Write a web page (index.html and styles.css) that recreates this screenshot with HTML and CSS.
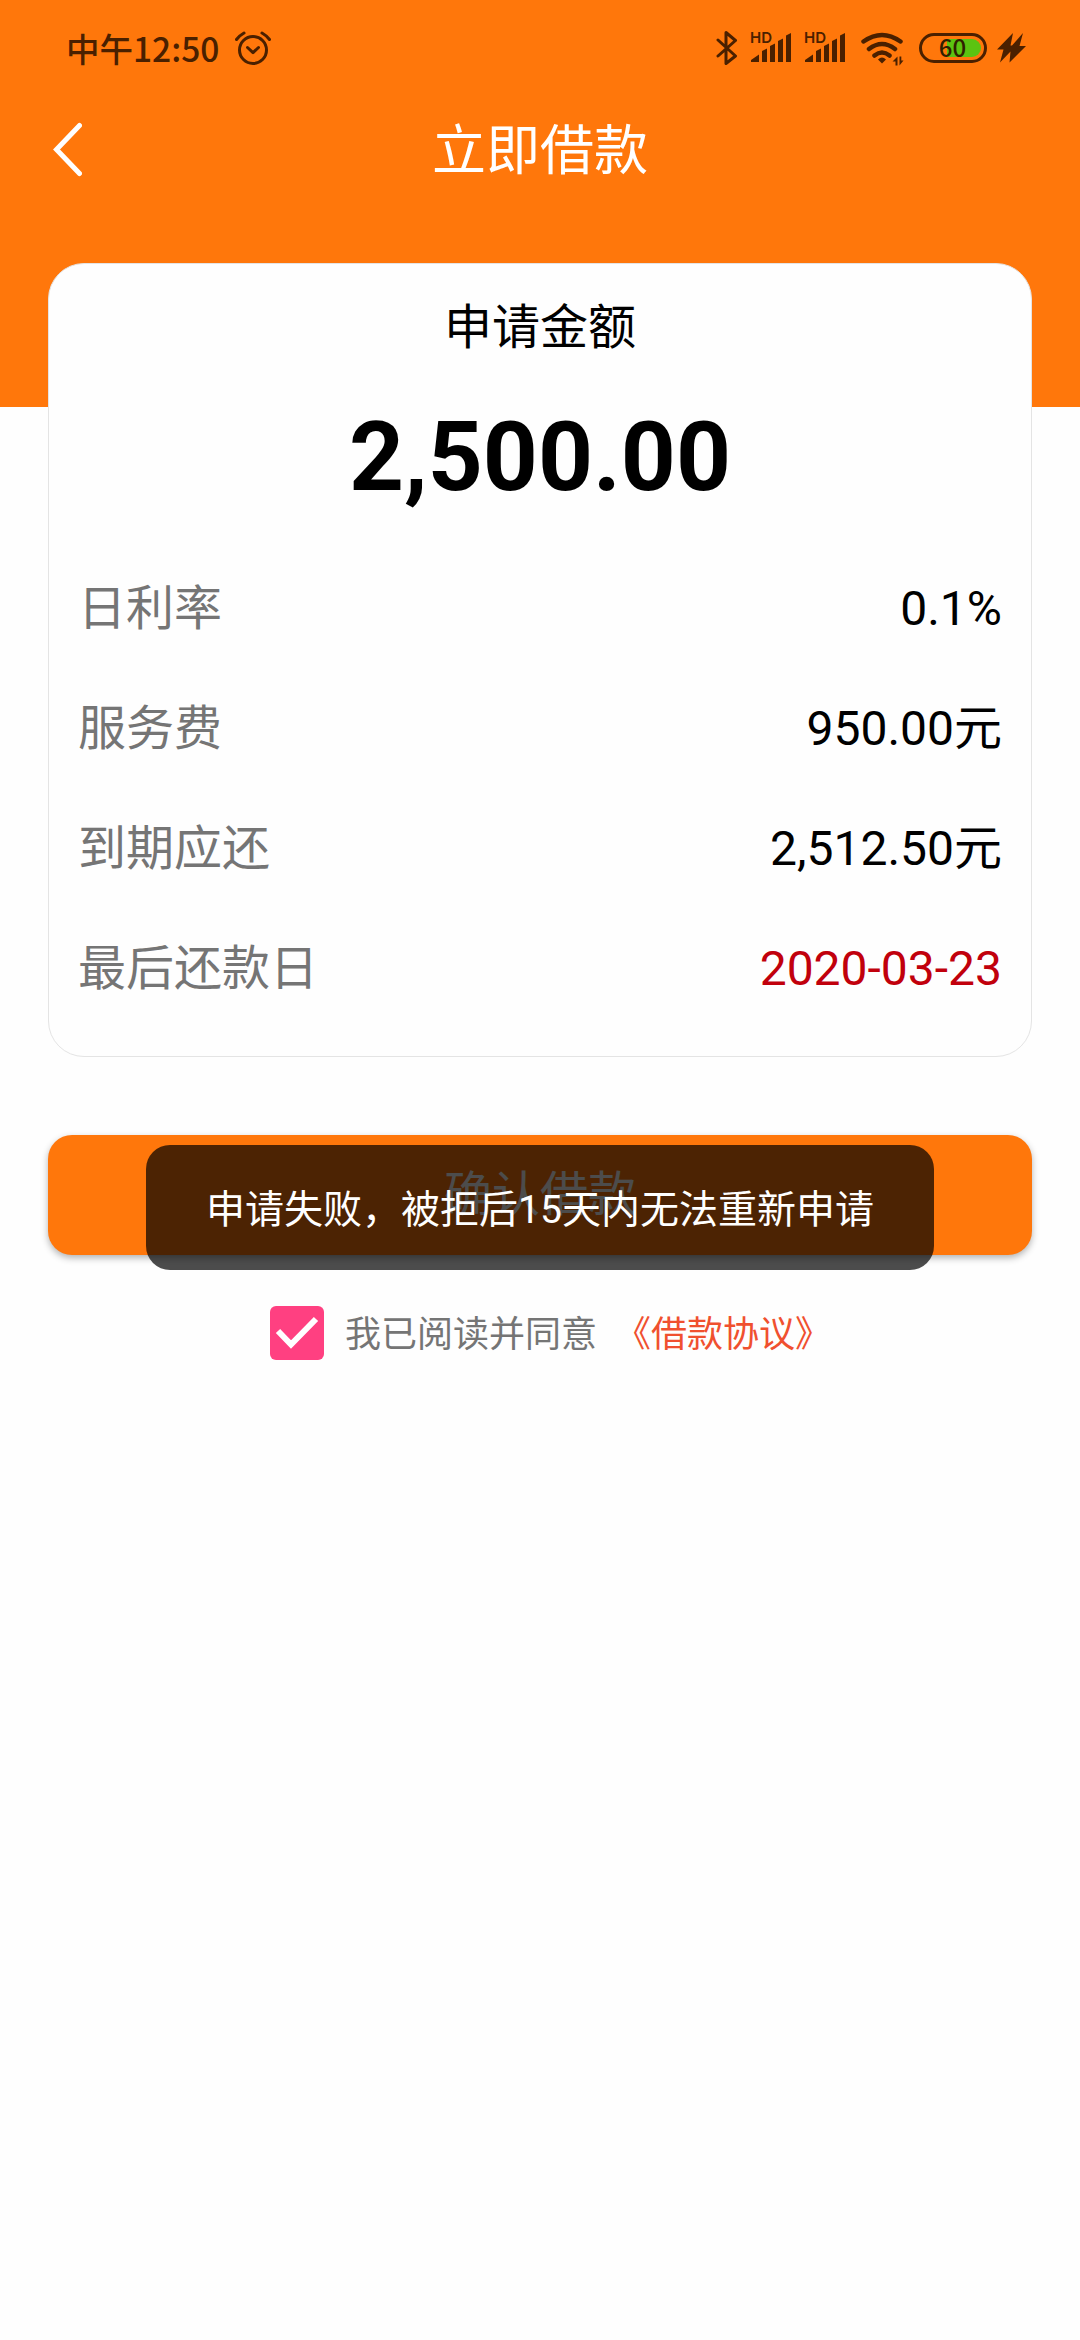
FILE: index.html
```
<!DOCTYPE html>
<html lang="zh-CN">
<head>
    <meta charset="UTF-8">
    <meta name="viewport" content="width=device-width, initial-scale=1.0">
    <title>立即借款</title>
    <link rel="stylesheet" href="styles.css">
</head>
<body>
<header class="header">
    <div class="status-bar">
        <span class="time">中午12:50</span>
        <svg class="alarm" width="36" height="36" viewBox="235 30 36 36">
            <circle cx="253" cy="50" r="13.5"/>
            <path d="M247.500 47.500l5.500 5.200 5.500-5.200M236.500 39.500q3-4 7.500-6.500M269.500 39.500q-3-4-7.500-6.500"/>
        </svg>
        <div class="status-icons">
            <svg class="bluetooth" width="22" height="36" viewBox="716 30 22 36">
                <path d="M718 40l17.500 16-9.500 7.500V32.500l9.500 8L718 56"/>
            </svg>
            <svg class="signal" width="42" height="48" viewBox="750 24 42 48">
                <text x="750" y="43.300">HD</text>
                <path d="M751 62v-2l8-5.500v7.500zM762 62V51l5-2.500V62zM770 62V46l5-2.500V62zM778 62V41l5-2.500V62zM786 62V35.500l5-2.500V62z"/>
            </svg>
            <svg class="signal" width="42" height="48" viewBox="750 24 42 48">
                <text x="750" y="43.300">HD</text>
                <path d="M751 62v-2l8-5.500v7.500zM762 62V51l5-2.500V62zM770 62V46l5-2.500V62zM778 62V41l5-2.500V62zM786 62V35.500l5-2.500V62z"/>
            </svg>
            <svg class="wifi" width="44" height="36" viewBox="860 30 44 36">
                <path class="arc" d="M863.500 41.500q18.500-13 37 0M869 49q13-10 26 0M874.500 55.500q7.500-6 15 0"/>
                <path d="M878 59.500q4-4 8 0L882 63.500zM897.500 56.500v9h-2v-4h-3zM899.500 65.500v-9h1.800v4h2.200z"/>
            </svg>
            <div class="battery"><span>60</span></div>
            <svg class="bolt" width="30" height="30" viewBox="997 33 30 30">
                <path d="M1013 33L997 49.500h6.500L1000 62.500l10.500-11L1009.500 62.500 1026 46h-6.500L1023 33l-11 12.500h-1.500z"/>
            </svg>
        </div>
    </div>
    <div class="nav-bar">
        <svg class="back" width="32" height="56" viewBox="0 0 32 56">
            <path d="M29.500 3.500L6.500 27.500 29.500 51.500"/>
        </svg>
        <h1>立即借款</h1>
    </div>
</header>

<main class="container">
    <section class="card">
        <h2>申请金额</h2>
        <p class="amount">2,500.00</p>
        <ul class="details">
            <li><span class="label">日利率</span><span>0.1%</span></li>
            <li><span class="label">服务费</span><span>950.00元</span></li>
            <li><span class="label">到期应还</span><span>2,512.50元</span></li>
            <li><span class="label">最后还款日</span><span class="due-date">2020-03-23</span></li>
        </ul>
    </section>

    <div class="submit">
        <button type="button" class="confirm-btn">确认借款</button>
        <div class="toast">申请失败，被拒后15天内无法重新申请</div>
    </div>

    <div class="agreement">
        <svg class="checkbox" width="54" height="54" viewBox="0 0 54 54">
            <rect width="54" height="54" rx="6"/>
            <path d="M8 25L21 38.500 46 13"/>
        </svg>
        <span>我已阅读并同意</span>
        <a href="#">《借款协议》</a>
    </div>
</main>
</body>
</html>
```
FILE: styles.css
```
* {
    box-sizing: border-box;
    margin: 0;
    padding: 0;
}
body {
    min-height: 2340px;
    background: #fefefe;
    color: #000;
    font-family: Roboto, "Noto Sans CJK SC", sans-serif;
    font-size: 48px;
}

/* Header */
.header {
    height: 407px;
    background: #ff770b;
}
.status-bar {
    display: flex;
    align-items: center;
    height: 96px;
    padding: 0 53px 0 66px;
}
.time {
    width: 169px;
    color: #4a2000;
    font-family: "Noto Sans CJK SC", sans-serif;
    font-size: 33.5px;
    font-weight: 500;
    line-height: 94px;
    white-space: nowrap;
}
.status-icons {
    display: flex;
    align-items: center;
    gap: 12px;
    margin-left: auto;
}
.alarm, .bluetooth, .wifi .arc {
    fill: none;
    stroke: #4a2000;
    stroke-width: 3;
    stroke-linecap: round;
    stroke-linejoin: round;
}
.wifi .arc {
    stroke-width: 4.5;
}
.signal, .wifi, .bolt {
    fill: #4a2000;
}
.signal text {
    font-family: Inter, sans-serif;
    font-size: 15px;
    font-weight: 600;
}
.wifi {
    margin-left: 2px;
}
.battery {
    width: 68px;
    height: 30px;
    margin-left: 3px;
    padding: 3px;
    border: 3px solid #4a2000;
    border-radius: 15px;
}
.battery span {
    display: block;
    height: 18px;
    border-radius: 9px;
    padding-right: 1px;
    background: linear-gradient(to right, transparent 40%, #5bc311 40%);
    color: #302000;
    font-family: "Noto Sans CJK SC", sans-serif;
    font-size: 24px;
    font-weight: 500;
    line-height: 16px;
    text-align: center;
}
.bolt {
    margin-left: -2px;
}
.nav-bar {
    display: flex;
    align-items: center;
    height: 108px;
    padding: 0 50px;
}
.nav-bar h1 {
    flex: 1;
    margin-right: 32px;
    padding-top: 4px;
    color: #fff;
    font-size: 54px;
    font-weight: 400;
    line-height: 104px;
    text-align: center;
}
.back {
    fill: none;
    stroke: #fff;
    stroke-width: 5;
    stroke-linecap: round;
}

/* Loan card */
.container {
    margin-top: -144px;
    padding: 0 48px;
}
.card {
    height: 794px;
    padding: 28px 29px 0;
    background: #fefefe;
    border: 1px solid #e4e4e4;
    border-radius: 36px;
}
.card h2 {
    font-size: 48px;
    font-weight: 400;
    line-height: 72px;
    text-align: center;
}
.amount {
    margin-top: 37px;
    font-size: 96px;
    font-weight: 700;
    line-height: 112px;
    text-align: center;
}
.details {
    margin-top: 36px;
    list-style: none;
}
.details li {
    display: flex;
    justify-content: space-between;
    height: 120px;
    line-height: 120px;
}
.label {
    color: #757575;
}
.due-date {
    color: #c1000c;
}

/* Submit button with the message on top of it */
.submit {
    position: relative;
    margin-top: 78px;
}
.confirm-btn {
    display: block;
    width: 100%;
    height: 120px;
    border: none;
    border-radius: 24px;
    background: #ff770b;
    box-shadow: 0 3px 7px rgba(0, 0, 0, 0.3);
    color: #fff;
    font-family: inherit;
    font-size: 48px;
    line-height: 120px;
    cursor: pointer;
}
.toast {
    position: absolute;
    top: 10px;
    left: 98px;
    width: 788px;
    height: 125px;
    padding-top: 4px;
    border-radius: 24px;
    background: rgba(0, 0, 0, 0.7);
    color: #fff;
    font-size: 39px;
    line-height: 122px;
    text-align: center;
    white-space: nowrap;
}

/* Agreement */
.agreement {
    display: flex;
    align-items: center;
    margin: 51px 0 0 222px;
    color: #757575;
    font-size: 36px;
    line-height: 50px;
}
.agreement span {
    margin: 0 18px 0 21px;
    padding-top: 4px;
}
.agreement a {
    padding-top: 4px;
    color: #f0502f;
    text-decoration: none;
}
.checkbox {
    fill: #ff4081;
}
.checkbox path {
    fill: none;
    stroke: #fff;
    stroke-width: 6;
}
```
